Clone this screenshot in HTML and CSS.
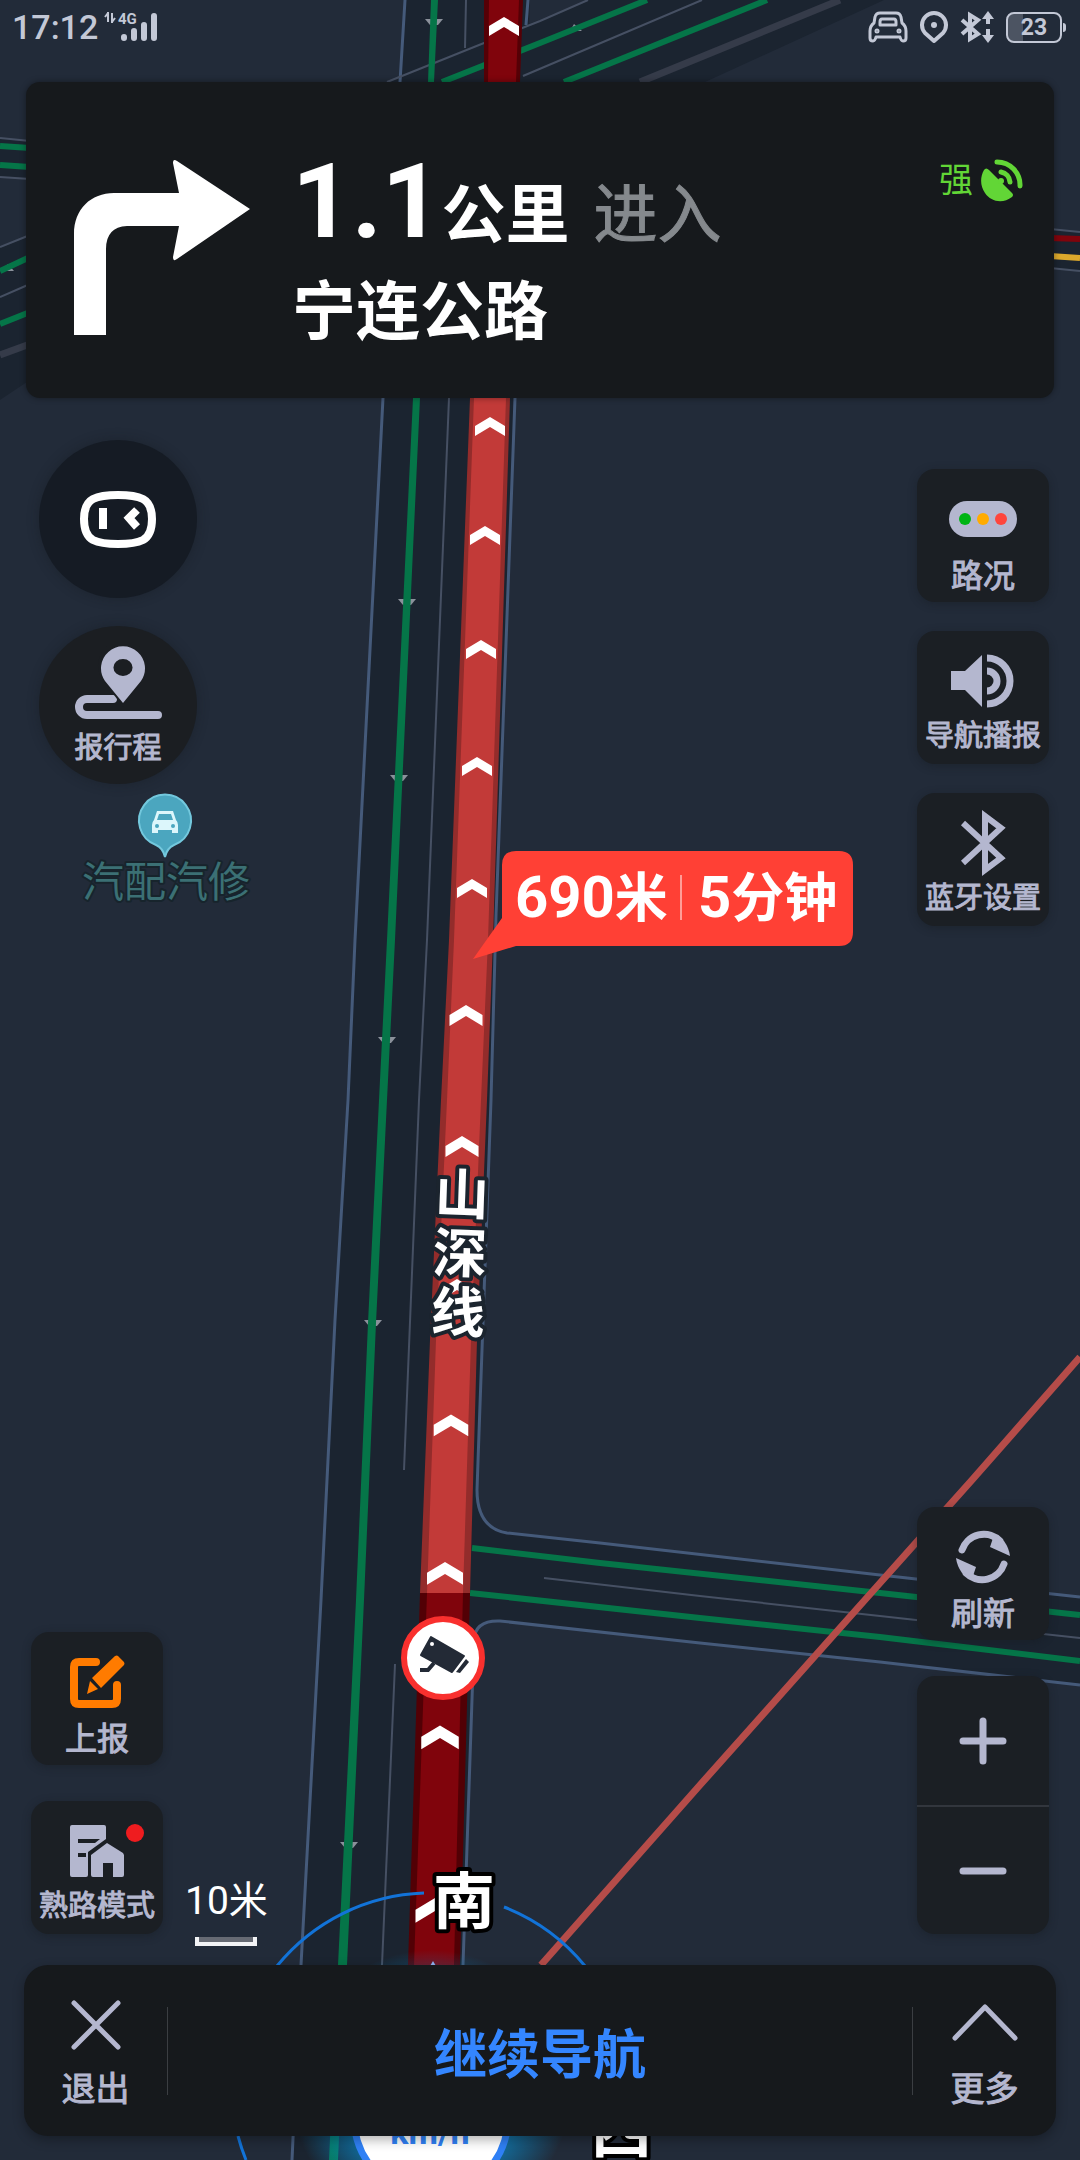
FILE: index.html
```html
<!DOCTYPE html>
<html lang="zh-CN">
<head>
    <meta charset="UTF-8">
    <meta name="viewport" content="width=device-width, initial-scale=1.0">
    <title>导航</title>
    <link rel="stylesheet" href="styles.css">
</head>
<body>
    <div class="screen">
        <!-- 地图 -->
        <svg class="map" viewBox="0 0 1080 2160" preserveAspectRatio="xMidYMid slice" xmlns="http://www.w3.org/2000/svg">
            <defs>
                <radialGradient id="glow">
                    <stop offset="0.5" stop-color="#0a8fd0" stop-opacity="0.9"/>
                    <stop offset="1" stop-color="#0a8fd0" stop-opacity="0"/>
                </radialGradient>
                <path id="chevron" d="M0 -10L15 -1V9L0 0L-15 9V-1Z"/>
                <path id="flow" d="M-9 -3H9L4 3H-4Z"/>
            </defs>

            <!-- 路面 -->
            <g class="road">
                <path d="M405 0L383 400L355 940L335 1320L301 1965L291 2160H457L463 1965L474 1640Q475 1620 500 1621L1080 1685V1597L600 1543L507 1533Q477 1528 477 1490L491 1100L515 400L530 0Z"/>
                <path d="M387 82L588 0H884L705 82Z"/>
                <path d="M0 138L30 141V179L0 177Z"/>
                <path d="M0 247L30 235V380L0 400Z"/>
                <path d="M1050 229L1080 232V271L1050 268Z"/>
            </g>
            <g class="edge">
                <path d="M405 0L400 82M383 398L355 940L348 1100L335 1320L321 1600L301 1965L292 2160"/>
                <path d="M528 0L526 25M515 398L496 916L491 1100L479 1433L477 1490Q477 1528 507 1533L600 1543L880 1575L1080 1597"/>
                <path d="M457 2160L463 1965L474 1640Q475 1620 500 1621L700 1643L880 1662L1080 1685"/>
            </g>
            <g class="lane">
                <path d="M466 0L465 48M449 398L427 940L419 1100L404 1470M395 1664L382 1965"/>
                <path d="M544 1578L700 1596L880 1616L1080 1638"/>
                <path d="M387 82L484 43L540 21L588 0M523 76L702 0"/>
                <path d="M0 138L30 141M0 177L30 179M0 247L30 235M0 297L30 284"/>
                <path d="M1050 229L1080 232M1050 268L1080 271"/>
            </g>
            <path class="lane-wide" d="M640 82L840 0M0 355L30 344"/>
            <g class="flow">
                <use href="#flow" x="434" y="22"/>
                <use href="#flow" x="407" y="602"/>
                <use href="#flow" x="399" y="778"/>
                <use href="#flow" x="387" y="1040"/>
                <use href="#flow" x="373" y="1323"/>
                <use href="#flow" x="349" y="1845"/>
                <path d="M570 31L582 31L574 24ZM2 271H14L8 264Z"/>
            </g>
            <path class="clear" d="M431 0H438L434 82H428ZM413 398H420L395 940L387 1100L376 1323L364 1600L347 1965L338 2160H329L338 1965L356 1600L368 1323L379 1100L387 940Z"/>
            <path class="clear-line" d="M472 1548L600 1563L880 1593L1080 1615M470 1593L700 1618L880 1637L1080 1661"/>
            <path class="clear-line" d="M442 82L540 43L647 0M564 82L767 0M0 146L30 148M0 165L30 167M0 271L30 257M0 324L30 312"/>
            <path class="jam-line" d="M1050 238L1080 239"/>
            <path class="slow-line" d="M1050 256L1080 258"/>
            <path class="rail" d="M1080 1357L972 1480L880 1583L700 1785L541 1965"/>

            <!-- 路线 -->
            <path fill="#550006" d="M484 0H523L520 82H484Z"/>
            <path fill="#80040c" d="M489 0H519L516 82H488Z"/>
            <path fill="#932c2b" d="M470 398H510L493 940L487 1100L477 1340L470 1593H420L430 1340L441 1100L449 940Z"/>
            <path fill="#c23a38" d="M474 398H506L488 940L481 1100L471 1340L463 1593H427L436 1340L447 1100L454 940Z"/>
            <path fill="#520005" d="M420 1593H470L460 1965L457 2160H402L408 1965Z"/>
            <path fill="#80040c" d="M427 1593H463L454 1965L451 2160H409L414 1965Z"/>
            <g fill="#fff">
                <use href="#chevron" x="504" y="27"/>
                <use href="#chevron" x="490" y="427"/>
                <use href="#chevron" x="485" y="536"/>
                <use href="#chevron" x="481" y="650"/>
                <use href="#chevron" x="477" y="767"/>
                <use href="#chevron" x="472" y="889"/>
                <use href="#chevron" transform="translate(466 1016) scale(1.1)"/>
                <use href="#chevron" transform="translate(462 1147) scale(1.1)"/>
                <use href="#chevron" transform="translate(457 1290) scale(1.1)"/>
                <use href="#chevron" transform="translate(451 1426) scale(1.15)"/>
                <use href="#chevron" transform="translate(445 1574) scale(1.2)"/>
                <use href="#chevron" transform="translate(440 1738) scale(1.25)"/>
                <use href="#chevron" transform="translate(435 1911) scale(1.3)"/>
            </g>
            <g class="road-name" transform="rotate(2 460 1252)">
                <text x="460" y="1214">山</text>
                <text x="460" y="1273">深</text>
                <text x="460" y="1332">线</text>
            </g>

            <!-- 电子眼 -->
            <circle cx="443" cy="1658" r="39" fill="#fff" stroke="#f9302e" stroke-width="6"/>
            <g fill="#232a36">
                <path d="M431 1637L464 1656L452 1672L421 1655Z" stroke="#232a36" stroke-width="2" stroke-linejoin="round"/>
                <path d="M466 1659L469 1662L460 1673L456 1672Z"/>
                <path d="M434 1663L428 1670H420" fill="none" stroke="#232a36" stroke-width="4"/>
                <circle cx="432" cy="1644" r="2" fill="#fff"/>
            </g>

            <!-- 兴趣点 -->
            <path d="M165 857Q163 848 156 845A26 26 0 1 1 174 845Q167 848 165 857Z" fill="#4ba6bf" stroke="#73c8dd" stroke-width="2"/>
            <path d="M157 811H173L176 820Q178 822 178 825V833H172V830H158V833H152V825Q152 822 154 820Z" fill="#dcf6fb"/>
            <path d="M159 814H171L173 820H157Z" fill="#4ba6bf"/>
            <circle cx="157" cy="826" r="2" fill="#4ba6bf"/>
            <circle cx="173" cy="826" r="2" fill="#4ba6bf"/>
            <text class="poi-name" x="166" y="897">汽配汽修</text>

            <!-- 拥堵提示 -->
            <path d="M516 851H839Q853 851 853 865V932Q853 946 839 946H516L473 959L502 918V865Q502 851 516 851Z" fill="#ff4035"/>
            <text class="jam-tip" x="515" y="917">690<tspan class="unit">米</tspan></text>
            <path d="M681 875V920" stroke="#ff9d97" stroke-width="2"/>
            <text class="jam-tip" x="698" y="917">5<tspan class="unit">分钟</tspan></text>

            <!-- 罗盘和车标 -->
            <circle cx="431" cy="2090" r="140" fill="url(#glow)"/>
            <path d="M277 1966A198 198 0 0 1 424 1893M504 1907A198 198 0 0 1 585 1966M238 2136A198 198 0 0 0 246 2160" fill="none" stroke="#1273d8" stroke-width="3"/>
            <path d="M433 1961L450 1990H416Z" fill="#8fb4f5"/>
            <circle cx="431" cy="2118" r="77" fill="#fff" stroke="#2f80f5" stroke-width="7"/>
            <text class="speed-unit" x="430" y="2144">km/h</text>
            <text class="compass" x="464" y="1924">南</text>
            <text class="compass" x="621" y="2152">西</text>
        </svg>

        <header class="status-bar">
            <div class="status-group">
                <span class="clock">17:12</span>
                <svg class="signal" width="56" height="30" viewBox="0 0 56 30">
                    <path d="M6 0V10M3 5L6 1M10 1V11M13 6L10 10" stroke="currentColor" stroke-width="2" fill="none"/>
                    <text x="16" y="12">4G</text>
                    <path d="M22 25V26M32 19V26M42 13V26M52 4V26" stroke="currentColor" stroke-width="6" stroke-linecap="round"/>
                </svg>
            </div>
            <div class="status-group status-icons">
                <svg width="40" height="32" viewBox="0 0 40 32" fill="none" stroke="currentColor" stroke-width="3" stroke-linejoin="round">
                    <path d="M12 2H28Q32 2 33 6L34 12Q38 15 38 20V27Q38 30 35 30Q33 30 32 26H8Q7 30 5 30Q2 30 2 27V20Q2 15 6 12L7 6Q8 2 12 2Z"/>
                    <path d="M14 8H26Q28 8 28 11V14H12V11Q12 8 14 8Z"/>
                    <circle cx="9" cy="20" r="1"/>
                    <circle cx="31" cy="20" r="1"/>
                </svg>
                <svg width="28" height="32" viewBox="0 0 28 32" fill="none" stroke="currentColor" stroke-width="4">
                    <path d="M14 30L5 22A12 12 0 1 1 23 22Z" stroke-linejoin="round"/>
                    <circle cx="14" cy="14" r="3" fill="currentColor" stroke="none"/>
                </svg>
                <svg width="34" height="32" viewBox="0 0 34 32" fill="none" stroke="currentColor" stroke-width="4">
                    <path d="M2 9L18 23L10 28V4L18 9L2 23"/>
                    <path d="M28 4V13M28 18V28"/>
                    <path d="M22 8L28 0L34 8ZM22 24L28 32L34 24Z" fill="currentColor" stroke="none"/>
                </svg>
                <span class="battery"><span class="battery-text">23</span></span>
            </div>
        </header>

        <section class="nav-card">
            <svg class="turn-icon" width="176" height="176" viewBox="0 0 176 176">
                <path d="M0 176V75C0 50 17 34 40 34H105L99 4Q99 -1 103 2L176 50L103 100Q99 103 99 98L105 67H53Q32 68 32 90V176Z" fill="#fff"/>
            </svg>
            <div class="nav-info">
                <p class="nav-distance"><span class="number">1.1</span><span class="unit-text">公里</span><span class="action">进入</span></p>
                <h1 class="nav-road">宁连公路</h1>
            </div>
            <div class="gps">
                <span>强</span>
                <svg width="43" height="43" viewBox="0 0 43 43">
                    <path d="M3 11Q5 8 8 11L31 34Q33 36 31 38C22 45 10 43 4 34C-1 27-1 18 3 11Z" fill="currentColor"/>
                    <circle cx="20" cy="22" r="3" fill="currentColor"/>
                    <path d="M16 3A23 23 0 0 1 39 27M20 13A11 11 0 0 1 29 23" fill="none" stroke="currentColor" stroke-width="5" stroke-linecap="round"/>
                </svg>
            </div>
        </section>

        <main class="controls">
            <div class="side side-left">
                <div class="round-group">
                    <button class="round-button" type="button" aria-label="语音助手">
                        <svg width="76" height="57" viewBox="0 0 76 57" fill="none" stroke="#fff">
                            <path d="M38 4Q55 4 63 8Q72 13 72 28Q72 44 63 49Q55 53 38 53Q21 53 13 49Q4 44 4 28Q4 13 13 8Q21 4 38 4Z" stroke-width="8"/>
                            <path d="M23 17V38M57 19L49 27L57 36" stroke-width="8"/>
                        </svg>
                    </button>
                    <button class="round-button trip" type="button">
                        <svg width="87" height="73" viewBox="0 0 87 73">
                            <path d="M38 53H12A8 8 0 0 0 12 69H83" fill="none" stroke="currentColor" stroke-width="8" stroke-linecap="round"/>
                            <path d="M48 61L27 33A25 25 0 1 1 69 33Z" fill="#1b1e22"/>
                            <path d="M48 57L30 35A22 22 0 1 1 66 35ZM48 13A9 8 0 1 0 48 30A9 8 0 1 0 48 13Z" fill="currentColor" fill-rule="evenodd"/>
                        </svg>
                        <span class="label label-long">报行程</span>
                    </button>
                </div>
                <div class="dock">
                    <div class="button-stack dock-stack">
                        <button class="tile" type="button">
                            <span class="tile-icon">
                                <svg width="55" height="54" viewBox="0 0 55 54">
                                    <path d="M26 7H9Q4 7 4 12V44Q4 49 9 49H42Q47 49 47 44V30" fill="none" stroke="#ff7b00" stroke-width="8" stroke-linecap="round"/>
                                    <path d="M22 23L45 1Q47 0 48 1L54 7Q55 9 54 10L31 33ZM20 26L28 34L17 39Z" fill="#ff7b00"/>
                                </svg>
                            </span>
                            <span class="label">上报</span>
                        </button>
                        <button class="tile" type="button">
                            <span class="tile-icon">
                                <svg width="54" height="52" viewBox="0 0 54 52" fill="currentColor">
                                    <path d="M2 0H34Q36 0 36 2V14L18 27V50Q18 52 16 52H2Q0 52 0 50V2Q0 0 2 0ZM8 14V18H25L30 14ZM8 28V32H16V28Z" fill-rule="evenodd"/>
                                    <path d="M37 18L53 28L54 30V50Q54 52 52 52H43V38H33V52H23Q21 52 21 50V30Z"/>
                                </svg>
                            </span>
                            <span class="label label-long">熟路模式</span>
                            <span class="dot"></span>
                        </button>
                    </div>
                    <div class="scale">
                        <span>10米</span>
                        <span class="scale-line"></span>
                    </div>
                </div>
            </div>

            <div class="side side-right">
                <div class="button-stack">
                    <button class="tile" type="button">
                        <span class="tile-icon">
                            <svg width="68" height="36" viewBox="0 0 68 36">
                                <rect width="68" height="36" rx="18" fill="currentColor"/>
                                <circle cx="16" cy="18" r="6" fill="#00b414"/>
                                <circle cx="34" cy="18" r="6" fill="#ffab00"/>
                                <circle cx="52" cy="18" r="6" fill="#ff453c"/>
                            </svg>
                        </span>
                        <span class="label">路况</span>
                    </button>
                    <button class="tile" type="button">
                        <span class="tile-icon">
                            <svg width="64" height="54" viewBox="0 0 64 54">
                                <path d="M0 17H14L31 1V53L14 36H0Z" fill="currentColor"/>
                                <path d="M36 4A23 23 0 0 1 36 50M36 17A10 10 0 0 1 36 37" fill="none" stroke="currentColor" stroke-width="7"/>
                            </svg>
                        </span>
                        <span class="label label-long">导航播报</span>
                    </button>
                    <button class="tile" type="button">
                        <span class="tile-icon">
                            <svg width="46" height="66" viewBox="0 0 46 66">
                                <path d="M3 13L41 48L25 60V6L41 18L3 53" fill="none" stroke="currentColor" stroke-width="6"/>
                            </svg>
                        </span>
                        <span class="label label-long">蓝牙设置</span>
                    </button>
                </div>
                <div class="button-stack dock-stack">
                    <button class="tile" type="button">
                        <span class="tile-icon">
                            <svg width="54" height="54" viewBox="0 0 54 54">
                                <g id="arc">
                                    <path d="M6 20A23 23 0 0 1 44 11" fill="none" stroke="currentColor" stroke-width="7" stroke-linecap="round"/>
                                    <path d="M37 8L34 17L54 26Q53 18 48 11Z" fill="currentColor"/>
                                </g>
                                <use href="#arc" transform="rotate(180 27 27)"/>
                            </svg>
                        </span>
                        <span class="label">刷新</span>
                    </button>
                    <div class="zoom">
                        <button class="zoom-button" type="button" aria-label="放大">
                            <svg width="48" height="48" viewBox="0 0 48 48"><path d="M4 24H44M24 4V44" stroke="currentColor" stroke-width="7" stroke-linecap="round"/></svg>
                        </button>
                        <button class="zoom-button" type="button" aria-label="缩小">
                            <svg width="48" height="48" viewBox="0 0 48 48"><path d="M4 24H44" stroke="currentColor" stroke-width="7" stroke-linecap="round"/></svg>
                        </button>
                    </div>
                </div>
            </div>
        </main>

        <footer class="bottom-bar">
            <button class="bar-button" type="button">
                <svg width="50" height="50" viewBox="0 0 50 50"><path d="M3 3L47 47M47 3L3 47" stroke="currentColor" stroke-width="5" stroke-linecap="round"/></svg>
                <span>退出</span>
            </button>
            <button class="continue" type="button">继续导航</button>
            <button class="bar-button" type="button">
                <svg width="66" height="50" viewBox="0 0 66 50"><path d="M3 38L33 7L63 38" fill="none" stroke="currentColor" stroke-width="5" stroke-linecap="round" stroke-linejoin="round"/></svg>
                <span>更多</span>
            </button>
        </footer>
    </div>
</body>
</html>
```

FILE: styles.css
```css
:root {
    --map-color: #222b39;
    --road-color: #1b2430;
    --card-color: #16191c;
    --tile-color: #1b1f24;
    --icon-color: #b4b7cf;
    --status-color: #c3c8d6;
    --primary-color: #3486ff;
    --clear-color: #057548;
}

* {
    margin: 0;
    padding: 0;
    box-sizing: border-box;
}

body {
    font-family: Roboto, "Noto Sans CJK SC", sans-serif;
    background-color: var(--map-color);
    color: #fff;
}

button {
    border: none;
    background: none;
    color: inherit;
    font-family: inherit;
    cursor: pointer;
}

svg {
    display: block;
    flex-shrink: 0;
}

.screen {
    position: relative;
    display: flex;
    flex-direction: column;
    min-height: 100vh;
    padding: 0 24px 24px;
    overflow: hidden;
}

/* 地图 */
.map {
    position: absolute;
    inset: 0;
    width: 100%;
    height: 100%;
}

.road {
    fill: var(--road-color);
}

.edge {
    fill: none;
    stroke: #455a7a;
    stroke-width: 3;
}

.lane {
    fill: none;
    stroke: #465063;
    stroke-width: 2;
}

.lane-wide {
    stroke: #353b49;
    stroke-width: 7;
}

.flow {
    fill: #8b919b;
}

.clear {
    fill: var(--clear-color);
}

.clear-line,
.jam-line,
.slow-line,
.rail {
    fill: none;
    stroke: var(--clear-color);
    stroke-width: 6;
}

.jam-line {
    stroke: #80040c;
}

.slow-line {
    stroke: #dba82c;
}

.rail {
    stroke: #b54c49;
    stroke-width: 7;
}

.road-name,
.poi-name,
.compass,
.speed-unit {
    text-anchor: middle;
    paint-order: stroke;
    stroke-linejoin: round;
}

.road-name {
    font-size: 54px;
    font-weight: 700;
    fill: #fff;
    stroke: #1b242e;
    stroke-width: 8px;
}

.poi-name {
    font-size: 42px;
    fill: #3b7074;
    stroke: #17242c;
    stroke-width: 4px;
}

.compass {
    font-size: 62px;
    font-weight: 700;
    fill: #fff;
    stroke: #000;
    stroke-width: 8px;
}

.speed-unit {
    font-size: 34px;
    font-weight: 700;
    fill: #2f80f5;
}

.jam-tip {
    font-size: 58px;
    font-weight: 700;
    fill: #fff;
}

.jam-tip .unit {
    font-size: 53px;
}

/* 状态栏 */
.status-bar {
    position: relative;
    display: flex;
    justify-content: space-between;
    align-items: center;
    height: 54px;
    margin: 0 -12px 28px;
    color: var(--status-color);
}

.status-group {
    display: flex;
    align-items: center;
    gap: 4px;
}

.status-icons {
    gap: 12px;
}

.clock {
    font-size: 34px;
    font-weight: 500;
    line-height: 40px;
}

.signal {
    overflow: visible;
}

.signal text {
    font-size: 15px;
    font-weight: 700;
    fill: currentColor;
}

.battery {
    position: relative;
    width: 56px;
    height: 31px;
    margin-right: 6px;
    border: 2px solid currentColor;
    border-radius: 8px;
    background: linear-gradient(to right, #4c5462 28%, transparent 28%);
    text-align: center;
}

.battery::after {
    content: "";
    position: absolute;
    top: 9px;
    right: -6px;
    width: 3px;
    height: 9px;
    border-radius: 0 3px 3px 0;
    background-color: currentColor;
}

.battery-text {
    display: block;
    font-size: 23px;
    font-weight: 700;
    line-height: 28px;
}

/* 转向信息 */
.nav-card {
    position: relative;
    display: flex;
    align-items: flex-start;
    margin: 0 2px;
    padding: 48px 30px 40px 48px;
    border-radius: 14px;
    background-color: var(--card-color);
    box-shadow: 0 0 6px rgba(0, 0, 0, 0.4);
}

.turn-icon {
    margin-top: 29px;
}

.nav-info {
    flex: 1;
    margin-left: 42px;
}

.nav-distance {
    display: flex;
    align-items: baseline;
    height: 138px;
    font-size: 64px;
    line-height: 144px;
}

.number {
    font-size: 104px;
    font-weight: 700;
}

.unit-text {
    font-weight: 700;
}

.action {
    margin-left: 24px;
    color: #85898d;
    -webkit-text-stroke: 1px currentColor;
}

.nav-road {
    font-size: 64px;
    font-weight: 700;
    line-height: 90px;
}

.gps {
    display: flex;
    align-items: center;
    gap: 8px;
    margin-top: 28px;
    color: #62d636;
    font-size: 34px;
    line-height: 44px;
}

/* 地图上的按钮 */
.controls {
    position: relative;
    flex: 1;
    display: flex;
    justify-content: space-between;
    padding: 0 7px 18px;
}

.side {
    display: flex;
    flex-direction: column;
    justify-content: space-between;
}

.side-left {
    padding-top: 42px;
}

.side-right {
    padding-top: 71px;
}

.round-group {
    display: flex;
    flex-direction: column;
    gap: 28px;
    padding-left: 8px;
}

.round-button {
    display: flex;
    flex-direction: column;
    align-items: center;
    justify-content: center;
    width: 158px;
    height: 158px;
    border-radius: 50%;
    background-color: #151b24;
    box-shadow: 0 0 12px rgba(20, 24, 30, 0.4);
}

.round-button.trip {
    gap: 8px;
    padding-top: 4px;
    background-color: #1b1e22;
    color: var(--icon-color);
}

.button-stack {
    display: flex;
    flex-direction: column;
    gap: 29px;
}

.dock-stack {
    gap: 36px;
    margin-bottom: 13px;
}

.tile {
    position: relative;
    display: flex;
    flex-direction: column;
    align-items: center;
    width: 132px;
    height: 133px;
    padding-top: 16px;
    border-radius: 18px;
    background-color: var(--tile-color);
    color: var(--icon-color);
    box-shadow: 0 2px 8px rgba(20, 24, 30, 0.4);
}

.tile-icon {
    display: flex;
    align-items: center;
    height: 68px;
}

.label {
    font-size: 32px;
    line-height: 46px;
    white-space: nowrap;
    -webkit-text-stroke: 1px currentColor;
}

.label-long {
    font-size: 29px;
    line-height: 42px;
}

.dot {
    position: absolute;
    top: 23px;
    right: 19px;
    width: 18px;
    height: 18px;
    border-radius: 50%;
    background-color: #ef1c1f;
}

.zoom {
    border-radius: 18px;
    background-color: var(--tile-color);
    color: var(--icon-color);
    box-shadow: 0 2px 8px rgba(20, 24, 30, 0.4);
}

.zoom-button {
    display: flex;
    align-items: center;
    justify-content: center;
    width: 132px;
    height: 129px;
}

.zoom-button + .zoom-button {
    border-top: 2px solid #32363d;
}

.dock {
    display: flex;
    align-items: flex-end;
    gap: 22px;
}

.scale {
    display: flex;
    flex-direction: column;
    align-items: center;
    gap: 8px;
    padding-bottom: 1px;
    font-size: 39px;
    line-height: 56px;
}

.scale-line {
    width: 62px;
    height: 9px;
    border: 4px solid #f2f3f5;
    border-top: none;
    background-color: #666a73;
}

/* 底部栏 */
.bottom-bar {
    position: relative;
    display: flex;
    align-items: center;
    min-height: 171px;
    border-radius: 24px;
    background-color: var(--card-color);
    box-shadow: 0 4px 12px rgba(0, 0, 0, 0.3);
}

.bar-button {
    display: flex;
    flex-direction: column;
    align-items: center;
    gap: 14px;
    width: 143px;
    padding-top: 12px;
    color: var(--icon-color);
    font-size: 34px;
    line-height: 50px;
    -webkit-text-stroke: 1px currentColor;
}

.continue {
    flex: 1;
    height: 88px;
    border-left: 1px solid #3b3e42;
    border-right: 1px solid #3b3e42;
    color: var(--primary-color);
    font-size: 53px;
    font-weight: 700;
}
```
